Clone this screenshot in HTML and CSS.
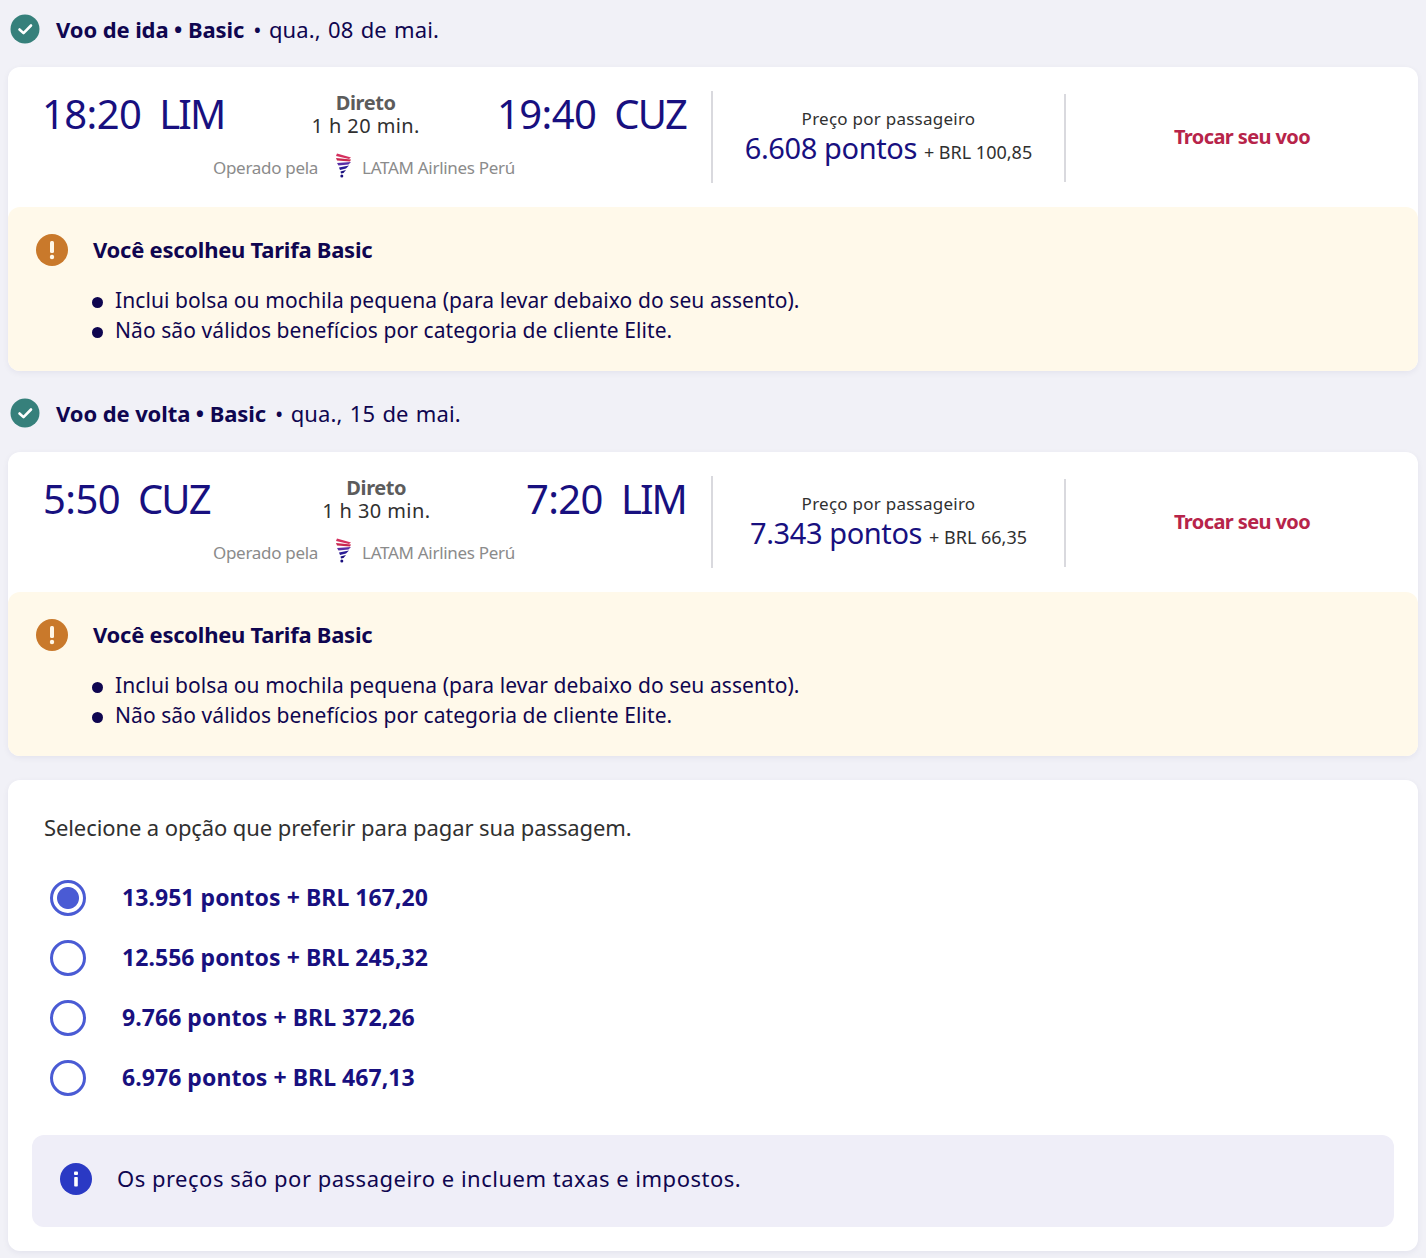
FILE: index.html
```html
<!DOCTYPE html>
<html lang="pt-BR">
<head>
<meta charset="utf-8">
<title>Resumo</title>
<link rel="stylesheet" href="styles.css">
</head>
<body>
<main class="page">
  <h2 class="head"><svg class="head-ico" viewBox="0 0 30 30"><circle cx="15" cy="15" r="14.5" fill="#36807b"/><path d="M9.5 15.500l4 3.600 7.500-7.600" fill="none" stroke="#fff" stroke-width="2.600" stroke-linecap="round" stroke-linejoin="round"/></svg><span class="head-t"><b>Voo de ida • Basic</b><span class="date">• qua., 08 de mai.</span></span></h2>
  <section class="card">
    <div class="row">
      <div class="flight">
        <div class="legs">
          <div class="time">18:20<span class="code">LIM</span></div>
          <div class="mid m1"><b>Direto</b><span>1 h 20 min.</span></div>
          <div class="time">19:40<span class="code">CUZ</span></div>
        </div>
        <div class="op"><span>Operado pela</span><svg class="logo" viewBox="0 0 18 25"><path d="M2 0.500L16 4.500 14 6 1 3z" fill="#d5305e"/><path d="M1 5L16 6.500 15 8.500 2 7.500z" fill="#c8274f"/><path d="M2 10L16 9 13.500 11.500 3.500 12.500z" fill="#5a2da6"/><path d="M4 14.500L14 12.500 11 15.500 5 17z" fill="#2a1a96"/><path d="M5.500 18.500L11 17 8.500 20 6 20.500z" fill="#1a0f7e"/><circle cx="6.800" cy="23" r="1.500" fill="#1a0f7e"/></svg><span>LATAM Airlines Perú</span></div>
      </div>
      <div class="price">
        <div class="p-label">Preço por passageiro</div>
        <div><span class="pts">6.608 pontos</span><span class="brl">+ BRL 100,85</span></div>
      </div>
      <div class="act"><a class="change">Trocar seu voo</a></div>
    </div>
    <div class="warn">
      <div class="warn-t"><svg class="warn-ico" viewBox="0 0 32 32"><circle cx="16" cy="16" r="16" fill="#c9792b"/><rect x="14" y="7" width="4" height="12" rx="1.500" fill="#fff7e8"/><circle cx="16" cy="23" r="2.200" fill="#fff7e8"/></svg><strong>Você escolheu Tarifa Basic</strong></div>
      <ul class="list"><li>Inclui bolsa ou mochila pequena (para levar debaixo do seu assento).</li><li>Não são válidos benefícios por categoria de cliente Elite.</li></ul>
    </div>
  </section>

  <h2 class="head head2"><svg class="head-ico" viewBox="0 0 30 30"><circle cx="15" cy="15" r="14.5" fill="#36807b"/><path d="M9.5 15.500l4 3.600 7.500-7.600" fill="none" stroke="#fff" stroke-width="2.600" stroke-linecap="round" stroke-linejoin="round"/></svg><span class="head-t"><b>Voo de volta • Basic</b><span class="date">• qua., 15 de mai.</span></span></h2>
  <section class="card">
    <div class="row">
      <div class="flight">
        <div class="legs">
          <div class="time t2">5:50<span class="code">CUZ</span></div>
          <div class="mid m2"><b>Direto</b><span>1 h 30 min.</span></div>
          <div class="time">7:20<span class="code">LIM</span></div>
        </div>
        <div class="op"><span>Operado pela</span><svg class="logo" viewBox="0 0 18 25"><path d="M2 0.500L16 4.500 14 6 1 3z" fill="#d5305e"/><path d="M1 5L16 6.500 15 8.500 2 7.500z" fill="#c8274f"/><path d="M2 10L16 9 13.500 11.500 3.500 12.500z" fill="#5a2da6"/><path d="M4 14.500L14 12.500 11 15.500 5 17z" fill="#2a1a96"/><path d="M5.500 18.500L11 17 8.500 20 6 20.500z" fill="#1a0f7e"/><circle cx="6.800" cy="23" r="1.500" fill="#1a0f7e"/></svg><span>LATAM Airlines Perú</span></div>
      </div>
      <div class="price">
        <div class="p-label">Preço por passageiro</div>
        <div><span class="pts">7.343 pontos</span><span class="brl">+ BRL 66,35</span></div>
      </div>
      <div class="act"><a class="change">Trocar seu voo</a></div>
    </div>
    <div class="warn">
      <div class="warn-t"><svg class="warn-ico" viewBox="0 0 32 32"><circle cx="16" cy="16" r="16" fill="#c9792b"/><rect x="14" y="7" width="4" height="12" rx="1.500" fill="#fff7e8"/><circle cx="16" cy="23" r="2.200" fill="#fff7e8"/></svg><strong>Você escolheu Tarifa Basic</strong></div>
      <ul class="list"><li>Inclui bolsa ou mochila pequena (para levar debaixo do seu assento).</li><li>Não são válidos benefícios por categoria de cliente Elite.</li></ul>
    </div>
  </section>

  <section class="pay">
    <p class="pay-t">Selecione a opção que preferir para pagar sua passagem.</p>
    <div class="opts">
      <div class="opt"><span class="radio on"></span><span class="opt-t">13.951 pontos + BRL 167,20</span></div>
      <div class="opt"><span class="radio"></span><span class="opt-t">12.556 pontos + BRL 245,32</span></div>
      <div class="opt"><span class="radio"></span><span class="opt-t">9.766 pontos + BRL 372,26</span></div>
      <div class="opt"><span class="radio"></span><span class="opt-t">6.976 pontos + BRL 467,13</span></div>
    </div>
    <div class="info"><svg class="info-ico" viewBox="0 0 32 32"><circle cx="16" cy="16" r="16" fill="#2a39c4"/><rect x="14" y="8.500" width="4" height="3.600" rx="1" fill="#fff"/><rect x="14.200" y="14" width="3.600" height="9.500" rx="0.800" fill="#fff"/></svg><span class="info-t">Os preços são por passageiro e incluem taxas e impostos.</span></div>
  </section>
</main>
</body>
</html>
```
FILE: styles.css
```css
* { box-sizing: border-box; }
html, body { margin: 0; }
body { background: #f1f1f7; font-family: "Noto Sans", "Open Sans", sans-serif; color: #0f0650; }
.page { padding: 0 8px 7px; }
.head { margin: 0; height: 67px; display: flex; align-items: center; gap: 16px; padding: 0 0 9px 2px; font-size: 22px; font-weight: 400; color: #0f0650; }
.head2 { height: 81px; padding: 2px 0 0 2px; }
.head b { font-weight: 700; letter-spacing: -0.1px; }
.date { margin-left: 9px; letter-spacing: 0.1px; word-spacing: 1.5px; }
.head-ico { width: 30px; height: 30px; flex: none; }
.card { background: #fff; border-radius: 12px; box-shadow: 0 2px 6px rgba(16,0,79,.06); }
.row { height: 140px; display: flex; padding-top: 24px; }
.flight { width: 705px; padding-left: 34px; padding-right: 25px; border-right: 2px solid #d9d9de; height: 92px; }
.legs { display: flex; justify-content: space-between; align-items: flex-start; }
.time { font-size: 40px; line-height: 46px; color: #18107f; letter-spacing: -0.6px; white-space: nowrap; }
.t2 { margin-left: 1px; }
.code { margin-left: 18px; letter-spacing: -1.9px; }
.mid { display: flex; flex-direction: column; align-items: center; font-size: 20px; line-height: 23px; color: #303030; letter-spacing: 0.4px; }
.m1 { margin-left: 10px; }
.m2 { margin-left: 17px; }
.mid b { color: #5c5c5c; font-weight: 700; letter-spacing: -0.4px; }
.op { display: flex; align-items: center; justify-content: center; height: 26px; margin-top: 17px; font-size: 17px; color: #8b8b8b; letter-spacing: -0.3px; }
.logo { width: 18px; height: 25px; margin: 0 9px 4px 17px; }
.price { width: 353px; height: 88px; margin-top: 3px; border-right: 2px solid #d9d9de; display: flex; flex-direction: column; align-items: center; padding-top: 13px; }
.p-label { font-size: 17px; line-height: 23px; color: #303030; letter-spacing: 0.25px; }
.pts { font-size: 29px; line-height: 36px; color: #18107f; letter-spacing: -0.4px; }
.brl { font-size: 18px; color: #303030; margin-left: 7px; }
.act { flex: 1; display: flex; justify-content: center; padding-top: 32px; }
.change { font-size: 20px; line-height: 28px; font-weight: 700; color: #b7244a; letter-spacing: -0.6px; }
.warn { background: #fff9ea; height: 164px; border-radius: 12px; padding: 26px 28px; }
.warn-t { display: flex; align-items: center; gap: 25px; height: 34px; font-size: 22px; }
.warn-ico { width: 32px; height: 32px; flex: none; }
.warn-t strong { font-weight: 700; color: #0f0650; letter-spacing: -0.25px; padding-bottom: 2px; }
.list { list-style: none; margin: 18px 0 0; padding: 0 0 0 56px; font-size: 21px; line-height: 30px; color: #0f0650; letter-spacing: 0.08px; }
.list li { position: relative; padding-left: 23px; }
.list li::before { content: ""; position: absolute; left: 0; top: 12px; width: 11px; height: 11px; border-radius: 50%; background: #0f0650; }
.pay { background: #fff; margin-top: 24px; height: 471px; border-radius: 12px; padding: 31px 24px 0; box-shadow: 0 2px 6px rgba(16,0,79,.06); }
.pay-t { margin: 0 0 0 12px; font-size: 22px; line-height: 32px; color: #303030; letter-spacing: -0.1px; }
.opts { margin-top: 25px; }
.opt { height: 60px; display: flex; align-items: center; gap: 36px; padding-left: 18px; font-size: 23px; font-weight: 700; color: #18107f; }
.opt-t { padding-bottom: 2px; letter-spacing: 0.05px; }
.radio { width: 36px; height: 36px; border-radius: 50%; border: 3px solid #4a5bd4; flex: none; background: #fff; }
.radio.on { background: radial-gradient(circle, #4a5bd4 0 10.500px, #fff 11.500px); }
.info { margin-top: 27px; height: 92px; background: #efeef8; border-radius: 12px; display: flex; align-items: center; gap: 25px; padding: 0 0 4px 28px; font-size: 22px; color: #0f0650; }
.info-t { letter-spacing: 0.5px; padding-bottom: 2px; }
.info-ico { width: 32px; height: 32px; flex: none; }
```
